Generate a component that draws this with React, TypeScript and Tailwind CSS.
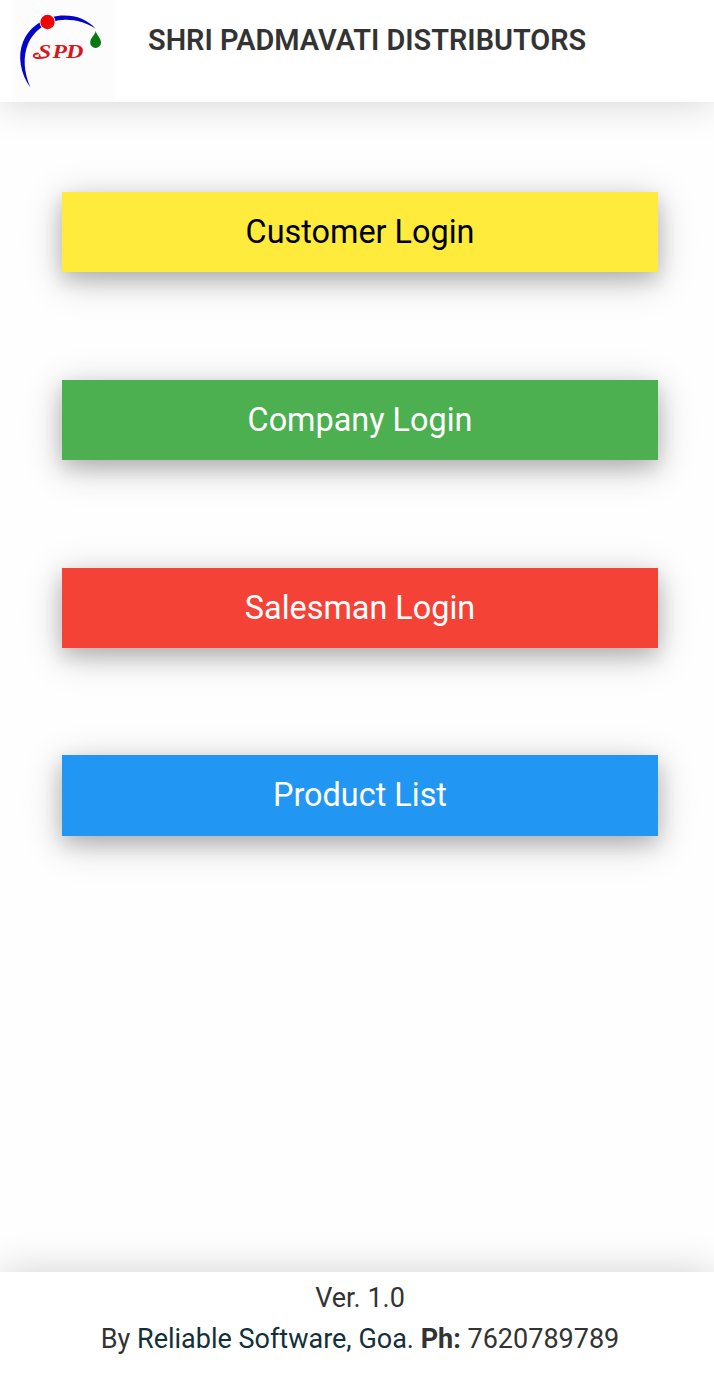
const links = [
  { name: "Customer Login", color: "bg-[#ffeb3b] text-black" },
  { name: "Company Login", color: "bg-[#4caf50] text-white" },
  { name: "Salesman Login", color: "bg-[#f44336] text-white" },
  { name: "Product List", color: "bg-[#2196f3] text-white" },
];

function Logo() {
  return (
    <svg className="ml-3 h-[102px] w-[103px] bg-[#fcfcfc]" viewBox="12 0 103 102">
      <path
        d="M30.500 87.500C20 74 17.500 55 23 42C30 25 47 15.500 64 15.500C77 15.500 88 20 95.500 28.500C86 22.500 76 19.500 65 19.700C48 20 34 30 28 44C23 56 23.500 72 30.500 87.500Z"
        fill="#0505c8"
      />
      <circle cx="47.500" cy="22" r="8" fill="#fff" />
      <circle cx="47.500" cy="22" r="7.200" fill="#f00505" />
      <path d="M95.700 31C96.500 35 101 38 101 42.500A5.400 5.400 0 0 1 90.200 42.500C90.200 38 95 35 95.700 31Z" fill="#087812" />
      <text
        x="30.500 42 53"
        y="58"
        transform="scale(1.250 1)"
        className="font-['Liberation_Serif',serif] text-[19px] font-bold italic"
        fill="#d9161c"
      >
        SPD
      </text>
      {/* swash on the S */}
      <path
        d="M38 53.500C33 53.500 32 57.500 37 58C40 58.300 42 58 45 57.300"
        fill="none"
        stroke="#d9161c"
        strokeWidth="1.800"
        strokeLinecap="round"
      />
    </svg>
  );
}

export default function App() {
  return (
    <div className="flex h-[1377px] w-full flex-col overflow-hidden bg-[#fefefe] font-[Roboto,sans-serif] text-[#333]">
      <header className="flex h-[102px] shrink-0 bg-white shadow-[0_0_40px_rgba(0,0,0,0.18)]">
        <Logo />
        <h1 className="ml-[33px] mt-5 text-[28.9px] leading-10 font-semibold whitespace-nowrap">
          SHRI PADMAVATI DISTRIBUTORS
        </h1>
      </header>

      <main className="flex flex-1 flex-col gap-[107.4px] pt-[90px] pr-14 pl-[62px]">
        {links.map((link) => (
          <button
            key={link.name}
            className={`h-[80.4px] w-full pb-[0.4px] text-[32.4px] leading-[48px] shadow-[0_8px_20px_0_rgba(0,0,0,0.2),0_8px_40px_0_rgba(0,0,0,0.19)] ${link.color}`}
          >
            {link.name}
          </button>
        ))}
      </main>

      <footer className="h-[105px] shrink-0 bg-white pt-1.5 pl-1.5 text-center text-[27px] leading-[41px] shadow-[0_0_40px_rgba(0,0,0,0.18)]">
        <p>Ver. 1.0</p>
        <p>
          By <a className="text-[#12303b]">Reliable Software, Goa.</a> <b>Ph:</b> 7620789789
        </p>
      </footer>
    </div>
  );
}
